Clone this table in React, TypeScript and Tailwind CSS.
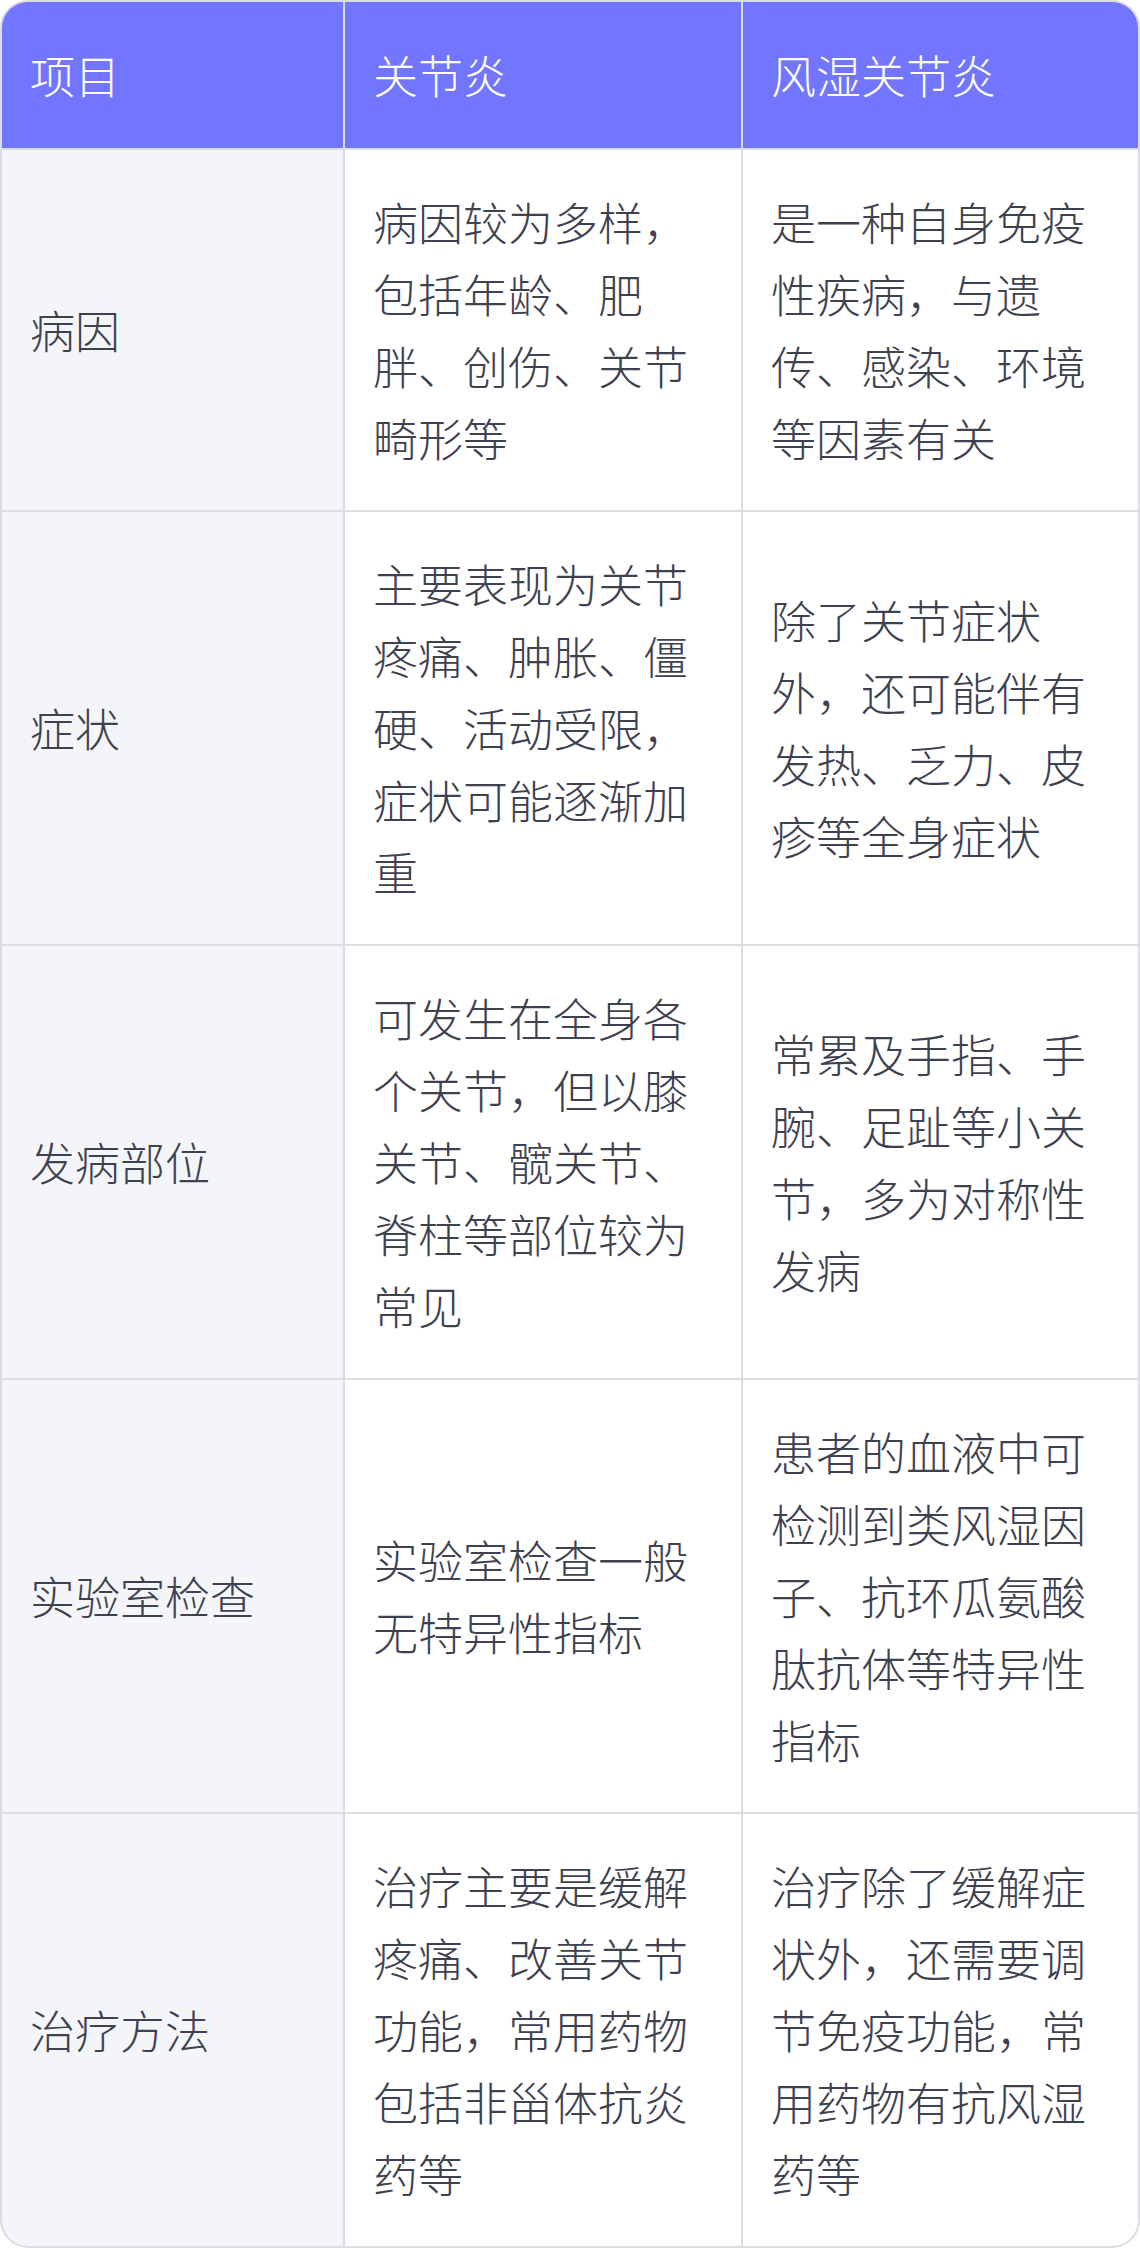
import React from "react";

const rows: [string, string, string][] = [
  ["病因", "病因较为多样，包括年龄、肥胖、创伤、关节畸形等", "是一种自身免疫性疾病，与遗传、感染、环境等因素有关"],
  ["症状", "主要表现为关节疼痛、肿胀、僵硬、活动受限，症状可能逐渐加重", "除了关节症状外，还可能伴有发热、乏力、皮疹等全身症状"],
  ["发病部位", "可发生在全身各个关节，但以膝关节、髋关节、脊柱等部位较为常见", "常累及手指、手腕、足趾等小关节，多为对称性发病"],
  ["实验室检查", "实验室检查一般无特异性指标", "患者的血液中可检测到类风湿因子、抗环瓜氨酸肽抗体等特异性指标"],
  ["治疗方法", "治疗主要是缓解疼痛、改善关节功能，常用药物包括非甾体抗炎药等", "治疗除了缓解症状外，还需要调节免疫功能，常用药物有抗风湿药等"],
];

const font = { fontFamily: '"Noto Sans CJK SC", "Noto Sans", sans-serif' };

export default function App() {
  return (
    <div className="w-[1140px] bg-white" style={font}>
      <div className="rounded-[28px] bg-[#dcdde2] p-[2px]">
        <div className="grid grid-cols-[341px_396px_1fr] gap-[2px] overflow-hidden rounded-[26px] bg-[#dcdde2] text-[45px] font-light leading-[72px] text-[#3e414f]">
          {["项目", "关节炎", "风湿关节炎"].map((h) => (
            <div key={h} className="flex h-[146px] items-center bg-[#7276ff] px-[28px] text-white">
              {h}
            </div>
          ))}
          {rows.map((r) => (
            <React.Fragment key={r[0]}>
              <div className="flex items-center bg-[#f4f5f9] px-[28px] py-[36px]">{r[0]}</div>
              <div className="flex items-center bg-white px-[28px] py-[36px]">{r[1]}</div>
              <div className="flex items-center bg-white px-[28px] py-[36px]">{r[2]}</div>
            </React.Fragment>
          ))}
        </div>
      </div>
    </div>
  );
}
